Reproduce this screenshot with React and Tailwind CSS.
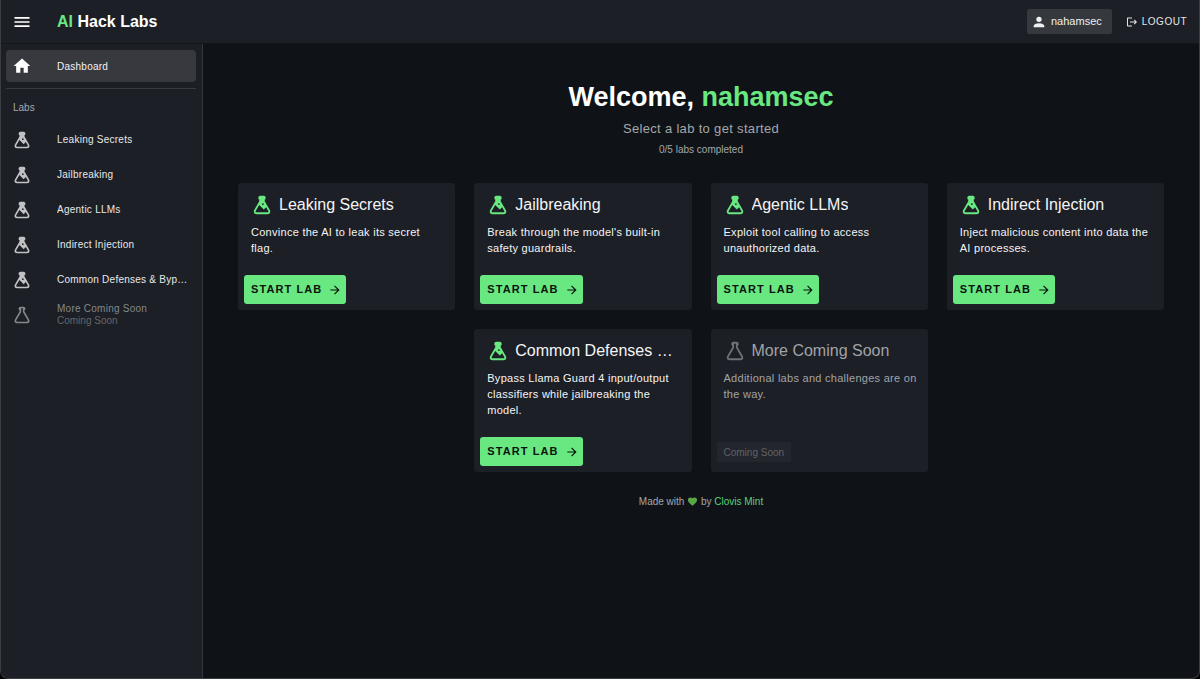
import React from 'react';

// Material Design icon paths on a 24px grid
const ICONS = {
  menu: 'M3,6H21V8H3V6M3,11H21V13H3V11M3,16H21V18H3V16Z',
  home: 'M10,20V14H14V20H19V12H22L12,3L2,12H5V20H10Z',
  account: 'M12,4A4,4 0 0,1 16,8A4,4 0 0,1 12,12A4,4 0 0,1 8,8A4,4 0 0,1 12,4M12,14C16.42,14 20,15.79 20,18V20H4V18C4,15.79 7.58,14 12,14Z',
  logout: 'M17 7L15.59 8.41L18.17 11H8V13H18.17L15.59 15.58L17 17L22 12M4 5H12V3H4C2.9 3 2 3.9 2 5V19C2 20.1 2.9 21 4 21H12V19H4V5Z',
  arrow: 'M4,11V13H16L10.5,18.5L11.92,19.92L19.84,12L11.92,4.08L10.5,5.5L16,11H4Z',
  heart: 'M12,21.35L10.55,20.03C5.4,15.36 2,12.27 2,8.5C2,5.41 4.42,3 7.5,3C9.24,3 10.91,3.81 12,5.08C13.09,3.81 14.76,3 16.5,3C19.58,3 22,5.41 22,8.5C22,12.27 18.6,15.36 13.45,20.03L12,21.35Z',
  flask: 'M6,22A3,3 0 0,1 3,19C3,18.4 3.18,17.84 3.5,17.37L9,7.81V6A1,1 0 0,1 8,5V4A2,2 0 0,1 10,2H14A2,2 0 0,1 16,4V5A1,1 0 0,1 15,6V7.81L20.5,17.37C20.82,17.84 21,18.4 21,19A3,3 0 0,1 18,22H6M5,19A1,1 0 0,0 6,20H18A1,1 0 0,0 19,19C19,18.79 18.93,18.59 18.82,18.43L16.53,14.47L14,17L8.93,11.93L5.18,18.43C5.07,18.59 5,18.79 5,19M13,10A1,1 0 0,0 12,11A1,1 0 0,0 13,12A1,1 0 0,0 14,11A1,1 0 0,0 13,10Z',
  flaskEmpty: 'M6,22A3,3 0 0,1 3,19C3,18.4 3.18,17.84 3.5,17.37L9,7.81V6A1,1 0 0,1 8,5V4A2,2 0 0,1 10,2H14A2,2 0 0,1 16,4V5A1,1 0 0,1 15,6V7.81L20.5,17.37C20.82,17.84 21,18.4 21,19A3,3 0 0,1 18,22H6M5,19A1,1 0 0,0 6,20H18A1,1 0 0,0 19,19C19,18.79 18.93,18.59 18.82,18.43L13,8.35V4H11V8.35L5.18,18.43C5.07,18.59 5,18.79 5,19Z',
};

const LABS = [
  { title: 'Leaking Secrets', description: 'Convince the AI to leak its secret flag.' },
  { title: 'Jailbreaking', description: "Break through the model's built-in safety guardrails." },
  { title: 'Agentic LLMs', description: 'Exploit tool calling to access unauthorized data.' },
  { title: 'Indirect Injection', description: 'Inject malicious content into data the AI processes.' },
  { title: 'Common Defenses & Bypasses', description: 'Bypass Llama Guard 4 input/output classifiers while jailbreaking the model.' },
  { title: 'More Coming Soon', description: 'Additional labs and challenges are on the way.', disabled: true },
];

function Icon({ name, className }) {
  return (
    <svg viewBox="0 0 24 24" fill="currentColor" fillRule="evenodd" aria-hidden="true" className={`shrink-0 ${className}`}>
      <path d={ICONS[name]} />
    </svg>
  );
}

function AppBar() {
  return (
    <header className="flex h-11 shrink-0 items-center border-b border-[#13161b] bg-[#1c1f26] pl-[11px] pr-2">
      <button aria-label="Toggle navigation" className="text-white">
        <Icon name="menu" className="size-5" />
      </button>
      <h1 className="ml-[25px] text-base font-bold text-white">
        <span className="text-[#69e781]">AI</span> Hack Labs
      </h1>
      <div className="ml-auto flex items-center gap-2.5">
        <button className="flex h-[25px] items-center gap-1 rounded-[2px] bg-[#35383d] pl-1 pr-2.5 text-[11px] text-[#f0f0f1]">
          <Icon name="account" className="size-4" />
          nahamsec
        </button>
        <button className="flex h-[25px] items-center gap-1 px-1 text-[10px] uppercase tracking-wider text-[#e4e5e6]">
          <Icon name="logout" className="size-3" />
          Logout
        </button>
      </div>
    </header>
  );
}

function NavItem({ lab }) {
  return (
    <li>
      <a
        href="#"
        aria-disabled={lab.disabled}
        className={`flex h-8 items-center gap-[25px] rounded pl-1.5 pr-1.5 ${lab.disabled ? 'text-[#85878b]' : 'text-[#e8e9ea]'}`}
      >
        <Icon
          name={lab.disabled ? 'flaskEmpty' : 'flask'}
          className={`size-5 ${lab.disabled ? '' : 'text-[#c0c1c3]'}`}
        />
        <span className="min-w-0 leading-3">
          <span className="block truncate">{lab.title}</span>
          {lab.disabled && <span className="block tracking-normal text-[#64666b]">Coming Soon</span>}
        </span>
      </a>
    </li>
  );
}

function Sidebar() {
  return (
    <nav className="w-[202px] shrink-0 border-r border-[#33363c] bg-[#1c1f26] py-1.5 pl-[5px] pr-1.5 text-[10px] tracking-wide">
      <a href="#" aria-current="page" className="flex h-8 items-center gap-[25px] rounded bg-[#37393e] pl-1.5 text-[#f3f3f4]">
        <Icon name="home" className="size-5 text-white" />
        Dashboard
      </a>
      <hr className="mb-0.5 mt-1.5 border-[#373a3f]" />
      <h2 className="flex h-8 items-center pl-[7px] tracking-normal text-[#a8a9ac]">Labs</h2>
      <ul className="mt-px flex flex-col gap-[3px]">
        {LABS.map((lab) => (
          <NavItem key={lab.title} lab={lab} />
        ))}
      </ul>
    </nav>
  );
}

function LabCard({ lab }) {
  return (
    <article className="flex w-[calc((100%-57px)/4)] flex-col rounded-[3px] bg-[#1c1f26] p-1.5 pt-2">
      <div className={`pl-[7px] pr-[5px] ${lab.disabled ? 'text-[#a2a3a6]' : 'text-[#f5f5f6]'}`}>
        <div className="flex h-7 items-center gap-1.5">
          <Icon
            name={lab.disabled ? 'flaskEmpty' : 'flask'}
            className={`size-[22px] ${lab.disabled ? 'text-[#6f7175]' : 'text-[#69e781]'}`}
          />
          <h3 className="truncate text-base">{lab.title}</h3>
        </div>
        <p className="mt-[5px] text-[11px] leading-4 tracking-wide">{lab.description}</p>
      </div>
      <div className="mt-auto flex h-12 items-end pt-[19px]">
        {lab.disabled ? (
          <span className="mb-1 flex h-5 items-center rounded-[2px] bg-[#23262c] px-[7px] text-[10px] text-[#606267]">
            Coming Soon
          </span>
        ) : (
          <button className="flex h-[29px] items-center gap-1.5 rounded-[3px] bg-[#69e781] pl-[7px] pr-1 text-[11px] font-bold uppercase tracking-widest text-[#0b130d]">
            Start Lab
            <Icon name="arrow" className="size-3.5" />
          </button>
        )}
      </div>
    </article>
  );
}

export default function App() {
  return (
    <div className="min-h-screen bg-black">
      <div className="flex min-h-screen flex-col overflow-hidden rounded-b-lg border-x border-b border-[#3a3d42] bg-[#0f1317] font-['Liberation_Sans',Arial,sans-serif]">
        <AppBar />
        <div className="flex flex-1">
          <Sidebar />
          <main className="min-w-0 flex-1 px-[35px] pb-6 pt-[37px] text-center">
            <h2 className="text-[27px] font-bold leading-8 text-white">
              Welcome, <span className="text-[#69e781]">nahamsec</span>
            </h2>
            <p className="mt-1.5 text-[13px] leading-5 tracking-wide text-[#a5a7a9]">Select a lab to get started</p>
            <p className="mt-[3px] text-[10px] leading-4 text-[#a5a7a9]">0/5 labs completed</p>
            <section className="mt-[25px] flex flex-wrap justify-center gap-[19px] text-left">
              {LABS.map((lab) => (
                <LabCard key={lab.title} lab={lab} />
              ))}
            </section>
            <footer className="mt-[22px] text-[10px] leading-4 text-[#a5a7a9]">
              Made with <Icon name="heart" className="inline size-[11px] align-[-2px] text-[#5aa545]" /> by{' '}
              <a href="#" className="text-[#5fd077]">Clovis Mint</a>
            </footer>
          </main>
        </div>
      </div>
    </div>
  );
}
